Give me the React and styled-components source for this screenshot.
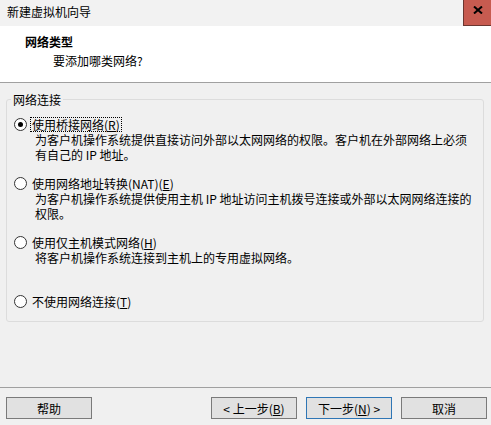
import React from 'react'
import styled, { createGlobalStyle } from 'styled-components'

const GlobalStyle = createGlobalStyle`
    body {
        margin: 0;
        background: #f0f0f0;
        font-family: "Noto Sans CJK SC", "Liberation Sans", sans-serif;
        font-size: 12px;
        color: #000;
    }
`;

const options = [
    {
        label: '使用桥接网络',
        key: 'R',
        checked: true,
        lines: [
            '为客户机操作系统提供直接访问外部以太网网络的权限。客户机在外部网络上必须',
            '有自己的 IP 地址。',
        ],
    },
    {
        label: '使用网络地址转换(NAT)',
        key: 'E',
        lines: [
            '为客户机操作系统提供使用主机 IP 地址访问主机拨号连接或外部以太网网络连接的',
            '权限。',
        ],
    },
    {
        label: '使用仅主机模式网络',
        key: 'H',
        lines: ['将客户机操作系统连接到主机上的专用虚拟网络。'],
    },
    {
        label: '不使用网络连接',
        key: 'T',
        lines: [],
    },
]

const App = () => {
    return (
        <Window>
            <GlobalStyle />
            <TitleBar>
                <Title>新建虚拟机向导</Title>
                <CloseButton>
                    <svg width="10" height="8" viewBox="0 0 10 8">
                        <path d="M1 0.5 L9 7.5 M9 0.5 L1 7.5" stroke="#000" strokeWidth="2" />
                    </svg>
                </CloseButton>
            </TitleBar>
            <Header>
                <HeaderTitle>网络类型</HeaderTitle>
                <HeaderSub>要添加哪类网络?</HeaderSub>
            </Header>
            <Body>
                <Group>
                    <Legend>网络连接</Legend>
                    {options.map((opt, i) => (
                        <Option key={opt.key} last={i === options.length - 1}>
                            <RadioRow>
                                <Radio checked={opt.checked} />
                                <Label focused={opt.checked}>
                                    {opt.label}(<u>{opt.key}</u>)
                                </Label>
                            </RadioRow>
                            {opt.lines.map((line) => (
                                <Desc key={line}>{line}</Desc>
                            ))}
                        </Option>
                    ))}
                </Group>
            </Body>
            <Footer>
                <Button>帮助</Button>
                <Spacer />
                <Button>&lt; 上一步(<u>B</u>)</Button>
                <Button primary>下一步(<u>N</u>) &gt;</Button>
                <Button>取消</Button>
            </Footer>
        </Window>
    )
}

const Window = styled.div`
    width: 491px;
    height: 425px;
    display: flex;
    flex-direction: column;
    background: #f0f0f0;
    overflow: hidden;
`;

const TitleBar = styled.div`
    height: 26px;
    display: flex;
    align-items: stretch;
    background: #f2f2f2;
`;

const Title = styled.div`
    padding: 4px 0 0 7px;
    line-height: 15px;
`;

const CloseButton = styled.div`
    margin-left: auto;
    width: 28px;
    display: flex;
    align-items: flex-start;
    justify-content: center;
    padding-top: 6px;
    box-sizing: border-box;
    background: #c75b50;
    border-left: 1px solid #6b3630;
    border-bottom: 1px solid #6b3630;
`;

const Header = styled.div`
    height: 56px;
    box-sizing: border-box;
    background: #fff;
    padding-top: 8px;
    border-bottom: 1px solid #a0a0a0;
    height: 57px;
`;

const HeaderTitle = styled.div`
    font-weight: bold;
    line-height: 15px;
    padding-left: 25px;
`;

const HeaderSub = styled.div`
    line-height: 15px;
    padding: 4px 0 0 53px;
`;

const Body = styled.div`
    flex: 1;
    padding: 9px 6px 0 6px;
`;

const Group = styled.fieldset`
    margin: 0;
    width: 478px;
    box-sizing: border-box;
    border: 1px solid #dcdcdc;
    border-radius: 3px;
    padding: 10px 0 12px 7px;
`;

const Legend = styled.legend`
    padding: 0 2px;
    margin-left: -3px;
    line-height: 15px;
`;

const Option = styled.div`
    height: ${(p) => (p.last ? 'auto' : '59px')};
    display: flex;
    flex-direction: column;
`;

const RadioRow = styled.div`
    display: flex;
    align-items: center;
    height: 15px;
`;

const Radio = styled.span`
    width: 13px;
    height: 13px;
    box-sizing: border-box;
    border-radius: 50%;
    border: 1px solid #333;
    background: #fff;
    display: flex;
    align-items: center;
    justify-content: center;
    &::after {
        content: '';
        width: 5px;
        height: 5px;
        border-radius: 50%;
        background: ${(p) => (p.checked ? '#000' : 'transparent')};
    }
`;

const Label = styled.span`
    margin-left: 3px;
    padding: 0 1px;
    line-height: 13px;
    border: 1px dotted ${(p) => (p.focused ? '#000' : 'transparent')};
    white-space: nowrap;
`;

const Desc = styled.div`
    padding-left: 21px;
    line-height: 15px;
    white-space: nowrap;
`;

const Footer = styled.div`
    height: 38px;
    box-sizing: border-box;
    border-top: 1px solid #a0a0a0;
    display: flex;
    align-items: flex-start;
    gap: 9px;
    padding: 9px 4px 0 6px;
`;

const Spacer = styled.div`
    flex: 1;
`;

const Button = styled.div`
    width: 86px;
    height: 22px;
    box-sizing: border-box;
    display: flex;
    align-items: center;
    justify-content: center;
    background: #e1e1e1;
    border: 1px solid ${(p) => (p.primary ? '#2f76b5' : '#7a7a7a')};
    white-space: nowrap;
`;

export default App
